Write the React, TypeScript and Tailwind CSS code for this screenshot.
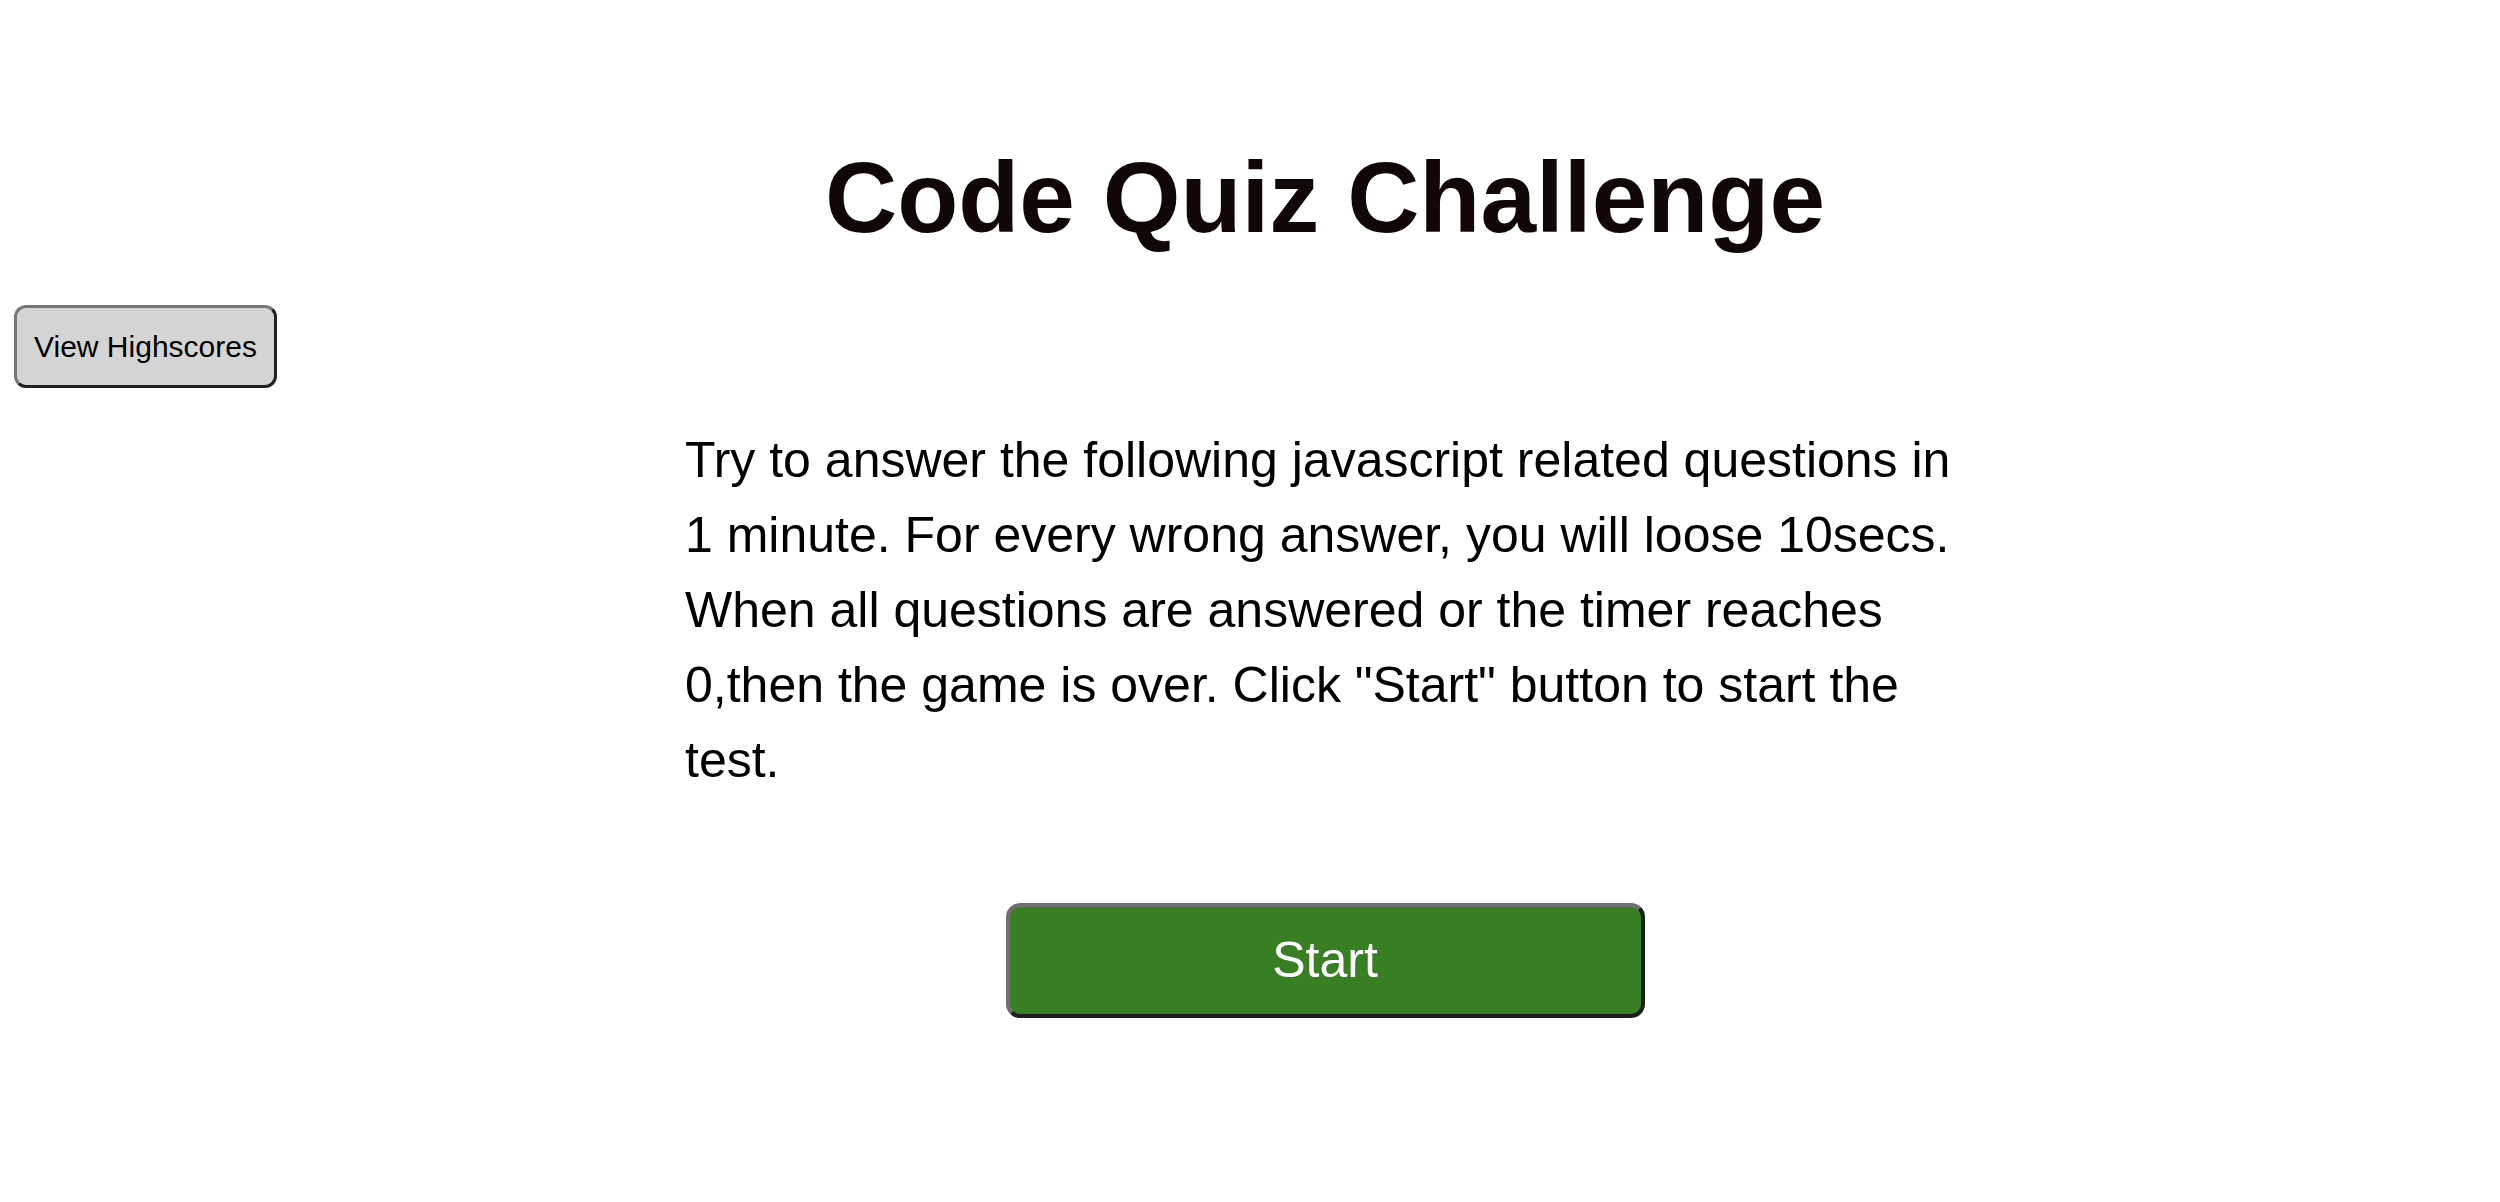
export default function App() {
  return (
    <div className="min-h-screen bg-white font-['Liberation_Sans',Arial,sans-serif]">
      {/* Title */}
      <h1 className="pt-[147px] pl-[150px] text-center text-[100px] leading-none font-bold text-[#120707]">
        Code Quiz Challenge
      </h1>

      {/* Highscores link */}
      <div className="mt-[58px] pl-[14px]">
        <button className="flex h-[83px] w-[263px] items-center justify-center rounded-[12px] border-[3px] border-solid border-t-[#777] border-l-[#777] border-b-[#222] border-r-[#222] bg-[#d4d4d4] text-[30px] text-black">
          View Highscores
        </button>
      </div>

      {/* Intro + start */}
      <div className="mt-[35px] flex flex-col items-center pl-[150px]">
        <p className="w-[1280px] text-[50px] leading-[75px] text-black">
          Try to answer the following javascript related questions in 1 minute. For every wrong answer, you will loose
          10secs. When all questions are answered or the timer reaches 0,then the game is over. Click "Start" button to
          start the test.
        </p>
        <button className="mt-[105px] flex h-[115px] w-[639px] items-center justify-center rounded-[14px] border-[4px] border-solid border-t-[#707070] border-l-[#707070] border-b-[#1e1e1e] border-r-[#1e1e1e] bg-[#387f23] text-[50px] text-white">
          Start
        </button>
      </div>
    </div>
  );
}
